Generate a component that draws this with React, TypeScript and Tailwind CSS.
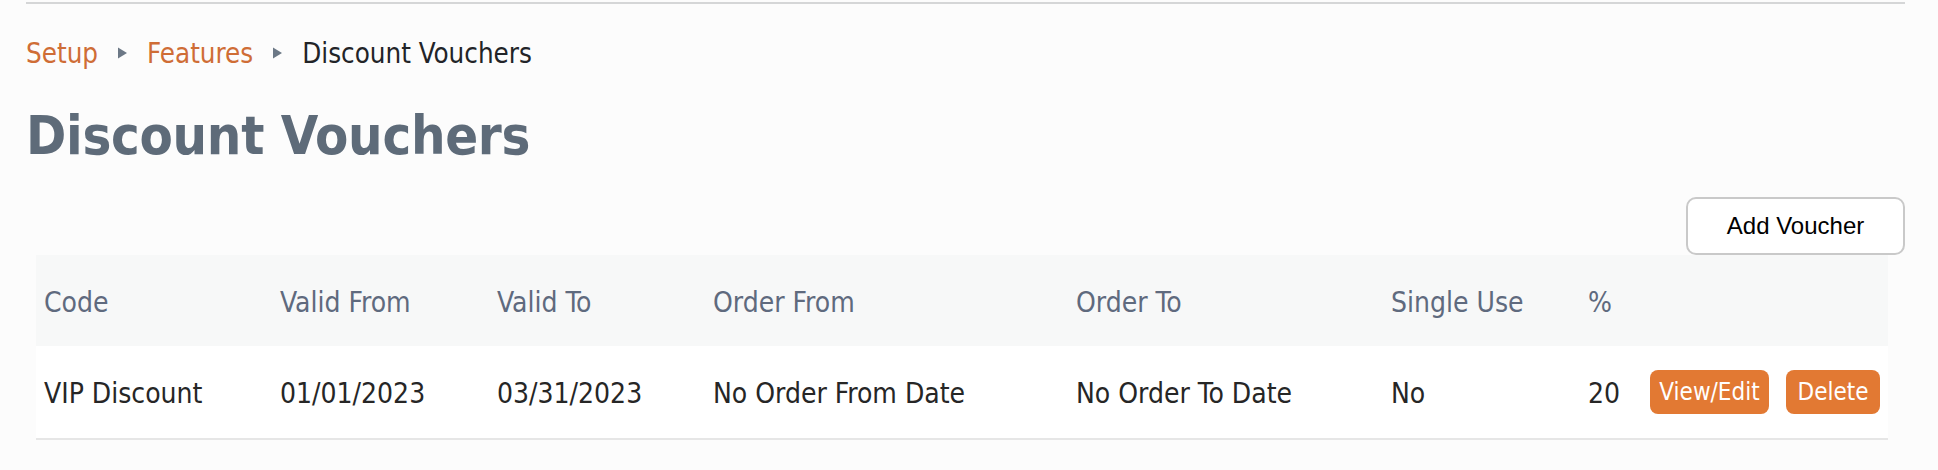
const vouchers = [
  {
    code: "VIP Discount",
    validFrom: "01/01/2023",
    validTo: "03/31/2023",
    orderFrom: "No Order From Date",
    orderTo: "No Order To Date",
    singleUse: "No",
    percent: 20,
  },
];

const font = { fontFamily: '"DejaVu Sans Condensed", "DejaVu Sans", Tahoma, sans-serif' };

function Crumb() {
  return (
    <svg width="11" height="12" viewBox="0 0 11 12" className="mx-[19px]">
      <path d="M1 0.5 L10 6 L1 11.5 Z" fill="#6c7886" />
    </svg>
  );
}

export default function App() {
  return (
    <div className="min-h-screen bg-[#fcfcfc] pl-[26px] pr-[33px] pt-[2px]" style={font}>
      <div className="h-[2px] bg-[#d5d6d7]" />

      {/* Breadcrumb */}
      <nav className="mt-[31px] flex items-center text-[27.5px] leading-[36px]">
        <a className="text-[#cf6d36]">Setup</a>
        <Crumb />
        <a className="text-[#cf6d36]">Features</a>
        <Crumb />
        <span className="text-[#222428]">Discount Vouchers</span>
      </nav>

      <h1 className="mt-[33px] text-[54px] leading-[64px] font-bold tracking-[-0.3px] text-[#5e6b79]">
        Discount Vouchers
      </h1>

      <div className="mt-[29px] flex justify-end">
        <button
          className="h-[58px] w-[219px] rounded-[10px] border-2 border-[#c9c9c9] bg-white text-[24px] text-black"
          style={{ fontFamily: '"Liberation Sans", Arial, sans-serif' }}
        >
          Add Voucher
        </button>
      </div>

      <div className="ml-[10px] mr-[17px]">
        <table className="w-full table-fixed border-collapse text-[28px]">
          <colgroup>
            <col className="w-[236px]" />
            <col className="w-[217px]" />
            <col className="w-[216px]" />
            <col className="w-[363px]" />
            <col className="w-[315px]" />
            <col className="w-[197px]" />
            <col className="w-[62px]" />
            <col />
          </colgroup>
          <thead>
            <tr className="h-[91px] bg-[#f7f8f8] text-[#5f6a7e]">
              {["Code", "Valid From", "Valid To", "Order From", "Order To", "Single Use", "%", ""].map((h, i) => (
                <th key={i} className="pl-[8px] pt-[4px] text-left font-normal align-middle">
                  {h}
                </th>
              ))}
            </tr>
          </thead>
          <tbody>
            {vouchers.map((v) => (
              <tr key={v.code} className="h-[93px] border-b-2 border-[#e6e6e6] bg-white text-[#262626]">
                <td className="pl-[8px] pt-[4px]">{v.code}</td>
                <td className="pl-[8px] pt-[4px]">{v.validFrom}</td>
                <td className="pl-[8px] pt-[4px]">{v.validTo}</td>
                <td className="pl-[8px] pt-[4px]">{v.orderFrom}</td>
                <td className="pl-[8px] pt-[4px]">{v.orderTo}</td>
                <td className="pl-[8px] pt-[4px]">{v.singleUse}</td>
                <td className="pl-[8px] pt-[4px]">{v.percent}</td>
                <td className="pl-[8px]">
                  <div className="flex gap-[17px]">
                    <button className="h-[44px] w-[119px] rounded-[8px] bg-[#e27933] text-[24px] text-white">
                      View/Edit
                    </button>
                    <button className="h-[44px] w-[94px] rounded-[8px] bg-[#e27933] text-[24px] text-white">
                      Delete
                    </button>
                  </div>
                </td>
              </tr>
            ))}
          </tbody>
        </table>
      </div>
    </div>
  );
}
